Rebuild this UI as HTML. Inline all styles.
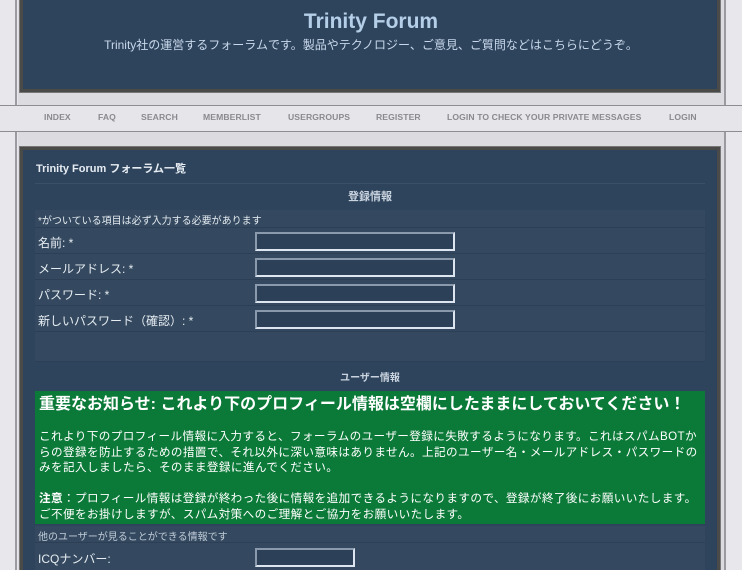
<!DOCTYPE html>
<html><head><meta charset="utf-8"><style>
*{margin:0;padding:0;box-sizing:border-box}
html,body{width:742px;height:570px;overflow:hidden}
body{background:#dcdce0;font-family:"Liberation Sans","Noto Sans CJK JP",sans-serif;position:relative}
.a{position:absolute}
.vl{position:absolute;top:0;height:570px;width:2px;background:#9a9aa0}
.panel{position:absolute;background:#2e445d;border:3px solid #4a4a48;box-shadow:0 0 0 1px #777 }
.t{position:absolute;color:#e6ecf2;font-size:12px;white-space:nowrap}
.row{position:absolute;left:35px;width:670px;background:#34495f;border-bottom:1px solid #2c3f54}
.inp{position:absolute;left:255px;width:200px;height:19px;background:#2c4058;border:2px solid #dde6f0;border-top-color:#8a9aac;border-left-color:#8a9aac}
.nav{position:absolute;top:112px;font-size:8.6px;font-weight:bold;color:#8a8a8e;letter-spacing:.1px}
</style></head><body>
<div class="a" style="left:0;top:0;width:18px;height:570px;background:#e8e8ec"></div>
<div class="a" style="left:724px;top:0;width:18px;height:570px;background:#e8e8ec"></div>
<div class="vl" style="left:15px"></div>
<div class="vl" style="left:724px"></div>
<div class="panel" style="left:20px;top:-4px;width:700px;height:96px"></div>
<div class="a" style="left:0;width:742px;text-align:center;top:10px;font-size:21px;font-weight:bold;color:#b6cfe8">Trinity Forum</div>
<div class="a" style="left:0;width:742px;text-align:center;top:36px;font-size:12px;color:#c8d8ea">Trinity社の運営するフォーラムです。製品やテクノロジー、ご意見、ご質問などはこちらにどうぞ。</div>
<div class="a" style="left:0;top:105px;width:742px;height:27px;background:#e6e6ea;border-top:1px solid #8e8e92;border-bottom:1px solid #8e8e92"></div>
<div class="nav" style="left:44px">INDEX</div>
<div class="nav" style="left:98px">FAQ</div>
<div class="nav" style="left:141px">SEARCH</div>
<div class="nav" style="left:203px">MEMBERLIST</div>
<div class="nav" style="left:288px">USERGROUPS</div>
<div class="nav" style="left:376px">REGISTER</div>
<div class="nav" style="left:447px">LOGIN TO CHECK YOUR PRIVATE MESSAGES</div>
<div class="nav" style="left:669px">LOGIN</div>
<div class="panel" style="left:20px;top:147px;width:700px;height:430px"></div>
<div class="t" style="left:36px;top:160px;font-size:11px;font-weight:bold">Trinity Forum フォーラム一覧</div>
<div class="a" style="left:35px;top:183px;width:670px;height:1px;background:#3a506a"></div>
<div class="t" style="left:35px;width:670px;text-align:center;top:188px;font-size:11px;font-weight:bold;color:#c9d3de">登録情報</div>
<div class="row" style="top:210px;height:18px"></div>
<div class="t" style="left:38px;top:212px;font-size:10px">*がついている項目は必ず入力する必要があります</div>
<div class="row" style="top:228px;height:26px"></div>
<div class="row" style="top:254px;height:26px"></div>
<div class="row" style="top:280px;height:26px"></div>
<div class="row" style="top:306px;height:26px"></div>
<div class="row" style="top:332px;height:30px"></div>
<div class="t" style="left:38px;top:234px">名前: *</div>
<div class="t" style="left:38px;top:260px">メールアドレス: *</div>
<div class="t" style="left:38px;top:286px">パスワード: *</div>
<div class="t" style="left:38px;top:312px">新しいパスワード（確認）: *</div>
<div class="inp" style="top:232px"></div>
<div class="inp" style="top:258px"></div>
<div class="inp" style="top:284px"></div>
<div class="inp" style="top:310px"></div>
<div class="t" style="left:35px;width:670px;text-align:center;top:369px;font-size:10px;font-weight:bold;color:#c9d3de">ユーザー情報</div>
<div class="a" style="left:35px;top:391px;width:670px;height:133px;background:#0b7a38;color:#fff;padding:4px 4px">
<div style="font-size:16px;font-weight:bold;line-height:20px">重要なお知らせ: これより下のプロフィール情報は空欄にしたままにしておいてください！</div>
<div style="font-size:11.6px;line-height:15.5px;margin-top:14px;letter-spacing:0.4px">これより下のプロフィール情報に入力すると、フォーラムのユーザー登録に失敗するようになります。これはスパムBOTからの登録を防止するための措置で、それ以外に深い意味はありません。上記のユーザー名・メールアドレス・パスワードのみを記入しましたら、そのまま登録に進んでください。<br><br><b>注意</b>：プロフィール情報は登録が終わった後に情報を追加できるようになりますので、登録が終了後にお願いいたします。ご不便をお掛けしますが、スパム対策へのご理解とご協力をお願いいたします。</div>
</div>
<div class="row" style="top:526px;height:17px"></div>
<div class="t" style="left:38px;top:528px;font-size:10px;color:#c0ccd8">他のユーザーが見ることができる情報です</div>
<div class="row" style="top:543px;height:30px"></div>
<div class="t" style="left:38px;top:550px">ICQナンバー:</div>
<div class="inp" style="top:548px;width:100px"></div>
</body></html>
